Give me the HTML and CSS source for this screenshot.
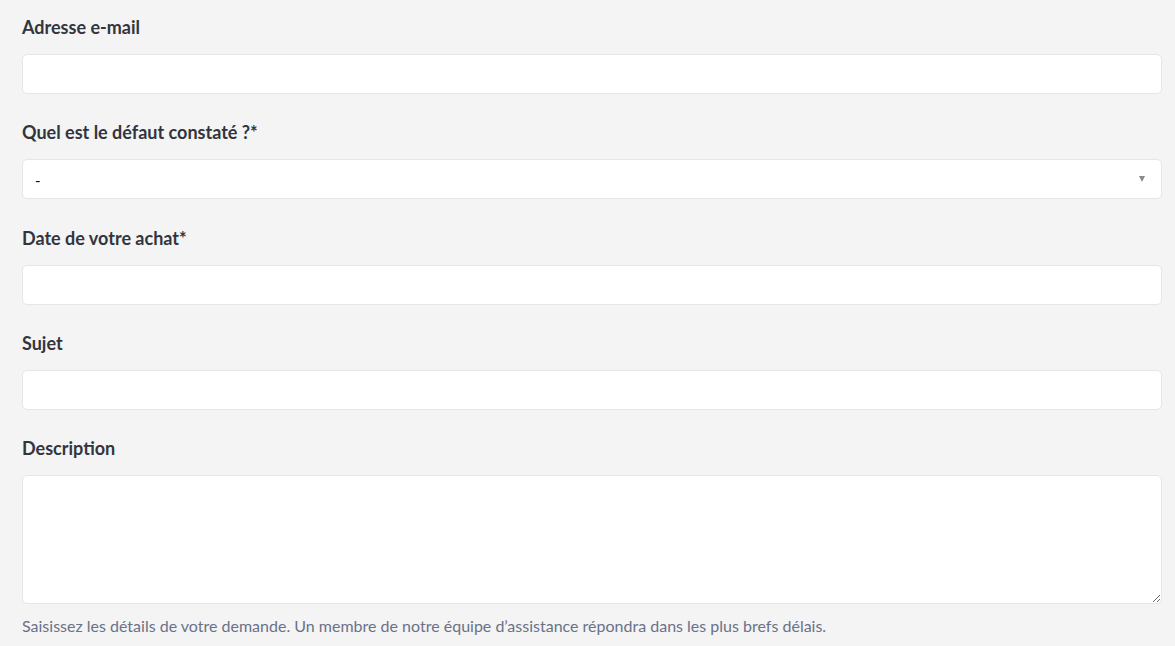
FILE: index.html
```html
<!DOCTYPE html>
<html lang="fr">
<head>
<meta charset="utf-8">
<title>Formulaire</title>
<link rel="stylesheet" href="styles.css">
</head>
<body>
<form class="form">
  <div class="field">
    <label class="label" for="email">Adresse e-mail</label>
    <input class="input" id="email" type="text">
  </div>
  <div class="field">
    <label class="label" for="defaut">Quel est le défaut constaté ?*</label>
    <div class="select">
      <span class="select-value">-</span>
      <span class="select-arrow"></span>
    </div>
  </div>
  <div class="field">
    <label class="label" for="date">Date de votre achat*</label>
    <input class="input" id="date" type="text">
  </div>
  <div class="field">
    <label class="label" for="sujet">Sujet</label>
    <input class="input" id="sujet" type="text">
  </div>
  <div class="field field-last">
    <label class="label" for="desc">Description</label>
    <textarea class="textarea" id="desc"></textarea>
    <p class="help">Saisissez les détails de votre demande. Un membre de notre équipe d’assistance répondra dans les plus brefs délais.</p>
  </div>
</form>
</body>
</html>
```

FILE: styles.css
```css
html, body {
  margin: 0;
  padding: 0;
  background: #f4f4f4;
  font-family: Lato, "Liberation Sans", sans-serif;
  color: #33353e;
}
.form {
  width: 1140px;
  padding: 14px 0 0 22px;
  display: flex;
  flex-direction: column;
  gap: 25.25px;
}
.field {
  display: flex;
  flex-direction: column;
}
.label {
  font-size: 18px;
  font-weight: 700;
  line-height: 27px;
  margin-bottom: 13px;
  color: #33353e;
}
.input, .select, .textarea {
  box-sizing: border-box;
  width: 1140px;
  height: 40px;
  margin: 0;
  background: #fff;
  border: 1px solid #e6e6e6;
  border-radius: 5px;
  font-family: inherit;
  outline: none;
}
.select {
  display: flex;
  align-items: center;
  justify-content: space-between;
  padding: 0 16px 0 12px;
}
.select-value {
  color: #000066;
  font-size: 15px;
  line-height: 1;
  padding-top: 2px;
}
.select-arrow {
  width: 0;
  height: 0;
  border-left: 3.5px solid transparent;
  border-right: 3.5px solid transparent;
  border-top: 6px solid #8a8a8a;
}
.textarea {
  height: 129px;
  resize: vertical;
  display: block;
}
.help {
  margin: 12px 0 0;
  font-size: 16px;
  line-height: 20px;
  color: #6a7189;
}
```
